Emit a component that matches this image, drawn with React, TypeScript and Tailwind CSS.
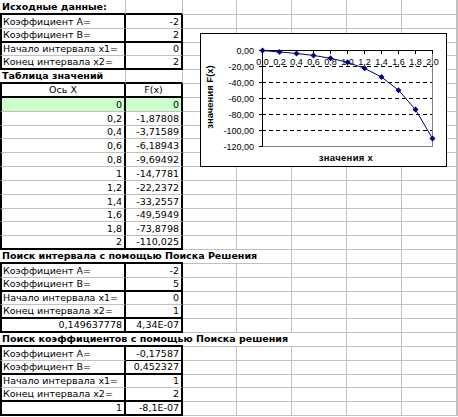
import type { ReactNode } from "react";

type RowDef = {
    a?: ReactNode;
    b?: ReactNode;
    aCls?: string;
    bCls?: string;
    tall?: boolean;
    open?: number; // how many of the columns after B lose their right gridline
    green?: boolean;
};

const L = "border-l-2 border-l-black";
const R = "border-r-2 border-r-black";
const B2 = "border-b-2 border-b-black";
const NR = "border-r-0";
const RIGHT = "justify-end pr-[2px]";
const CENTER = "justify-center";

const box = (last = false) => ({
    aCls: `${L} ${R} pl-[1px] ${last ? B2 : ""}`,
    bCls: `${R} ${RIGHT} ${last ? B2 : ""}`,
});

const num = (last = false) => ({
    aCls: `${L} ${R} ${RIGHT} ${last ? B2 : ""}`,
    bCls: `${R} ${RIGHT} ${last ? B2 : ""}`,
});

const Title = ({ children }: { children: ReactNode }) => (
    <span className="font-bold">{children}</span>
);

const ROWS: RowDef[] = [
    { a: <Title>Исходные данные:</Title>, aCls: `${B2} pl-[2px]`, bCls: B2, tall: true },
    { a: "Коэффициент А=", b: "-2", ...box() },
    { a: "Коэффициент В=", b: "2", ...box(true) },
    { a: "Начало интервала x1=", b: "0", ...box() },
    { a: "Конец интервала x2=", b: "2", ...box(true) },
    { a: <Title>Таблица значений</Title>, aCls: `${B2} pl-[2px]`, bCls: B2 },
    { a: "Ось X", b: "F(x)", aCls: `${L} ${R} ${B2} ${CENTER}`, bCls: `${R} ${B2} ${CENTER}` },
    { a: "0", b: "0", ...num(), green: true },
    { a: "0,2", b: "-1,87808", ...num() },
    { a: "0,4", b: "-3,71589", ...num() },
    { a: "0,6", b: "-6,18943", ...num() },
    { a: "0,8", b: "-9,69492", ...num() },
    { a: "1", b: "-14,7781", ...num() },
    { a: "1,2", b: "-22,2372", ...num() },
    { a: "1,4", b: "-33,2557", ...num() },
    { a: "1,6", b: "-49,5949", ...num() },
    { a: "1,8", b: "-73,8798", ...num() },
    { a: "2", b: "-110,025", ...num(true) },
    { a: <Title>Поиск интервала с помощью Поиска Решения</Title>, aCls: `${B2} ${NR} pl-[2px] overflow-visible`, bCls: `${B2} ${NR}`, open: 1 },
    { a: "Коэффициент А=", b: "-2", ...box() },
    { a: "Коэффициент В=", b: "5", ...box(true) },
    { a: "Начало интервала x1=", b: "0", ...box() },
    { a: "Конец интервала x2=", b: "1", ...box(true) },
    { a: "0,149637778", b: "4,34E-07", ...num(true) },
    { a: <Title>Поиск коэффициентов с помощью Поиска решения</Title>, aCls: `${B2} ${NR} pl-[2px] overflow-visible`, bCls: `${B2} ${NR}`, open: 2 },
    { a: "Коэффициент А=", b: "-0,17587", aCls: `${L} ${R} pl-[1px]`, bCls: `${R} ${RIGHT} border-b-black` },
    { a: "Коэффициент В=", b: "0,452327", ...box(true) },
    { a: "Начало интервала x1=", b: "1", ...box() },
    { a: "Конец интервала x2=", b: "2", ...box(true) },
    { a: "1", b: "-8,1E-07", ...num(true) },
];

const REST = ["w-[54px]", "w-[55px]", "w-[55px]", "w-[55px]", "w-[55px]", "flex-1"];

const CELL = "flex h-full shrink-0 items-end overflow-hidden whitespace-nowrap border-b border-r border-[#c0c0c0] pb-[1px] leading-[10px]";

function SheetRow({ row }: { row: RowDef }) {
    return (
        <div className={`flex ${row.tall ? "h-[15px]" : "h-[13.83px]"}`}>
            <div className={`${CELL} w-[126px] ${row.green ? "bg-[#ccffcc]" : ""} ${row.aCls ?? ""}`}>
                <span>{row.a}</span>
            </div>
            <div className={`${CELL} w-[57px] ${row.green ? "bg-[#ccffcc]" : ""} ${row.bCls ?? ""}`}>
                <span>{row.b}</span>
            </div>
            {REST.map((w, i) => (
                <div key={i} className={`${CELL} ${w} ${i < (row.open ?? 0) ? NR : ""}`} />
            ))}
        </div>
    );
}

const F = [0, 1.87808, 3.71589, 6.18943, 9.69492, 14.7781, 22.2372, 33.2557, 49.5949, 73.8798, 110.025];
const X0 = 61;
const Y0 = 16;
const pts = F.map((f, i) => [X0 + 17 * i + 0.5, Y0 + 0.8 * f + 0.5] as const);

function Chart() {
    const grid = [1, 2, 3, 4, 5];
    const yLabels = ["0,00", "-20,00", "-40,00", "-60,00", "-80,00", "-100,00", "-120,00"];
    const xLabels = ["0,0", "0,2", "0,4", "0,6", "0,8", "1,0", "1,2", "1,4", "1,6", "1,8", "2,0"];
    return (
        <div className="absolute left-[200px] top-[33px] h-[134px] w-[247px] border border-black bg-white">
            <svg width="245" height="132" className="block font-['Liberation_Sans',Arial,sans-serif]">
                {grid.map(g => (
                    <line key={g} x1={X0} x2={231} y1={Y0 + 16 * g + 0.5} y2={Y0 + 16 * g + 0.5} stroke="#000" strokeDasharray="4 3" />
                ))}
                <line x1={231.5} x2={231.5} y1={Y0} y2={113} stroke="#808080" />
                <line x1={X0} x2={232} y1={112.5} y2={112.5} stroke="#808080" />
                <line x1={X0 + 0.5} x2={X0 + 0.5} y1={Y0} y2={113} stroke="#000" />
                <line x1={X0} x2={232} y1={Y0 + 0.5} y2={Y0 + 0.5} stroke="#000" />
                {grid.concat([0, 6]).map(g => (
                    <line key={g} x1={X0 - 3} x2={X0} y1={Y0 + 16 * g + 0.5} y2={Y0 + 16 * g + 0.5} stroke="#000" />
                ))}
                {xLabels.map((_, i) => (
                    <line key={i} x1={X0 + 17 * i + 0.5} x2={X0 + 17 * i + 0.5} y1={Y0} y2={Y0 + 4} stroke="#000" />
                ))}
                {yLabels.map((t, i) => (
                    <text key={t} x={53} y={Y0 + 16 * i + 3.5} fontSize="9" textAnchor="end" fill="#000">
                        {t}
                    </text>
                ))}
                {xLabels.map((t, i) => (
                    <text key={t} x={X0 + 17 * i + 0.5} y={31} fontSize="9" textAnchor="middle" fill="#000">
                        {t}
                    </text>
                ))}
                <polyline points={pts.map(p => p.join(",")).join(" ")} fill="none" stroke="#000080" strokeWidth="1" />
                {pts.map(([x, y], i) => (
                    <polygon key={i} points={`${x},${y - 3} ${x + 3},${y} ${x},${y + 3} ${x - 3},${y}`} fill="#000080" />
                ))}
                <text x={9} y={63} fontSize="9.5" fontWeight="bold" textAnchor="middle" transform="rotate(-90 9 63)" dy="3" fill="#000">
                    значения F(x)
                </text>
                <text x={145} y={127} fontSize="9.5" fontWeight="bold" textAnchor="middle" fill="#000" letterSpacing="0.3">
                    значения х
                </text>
            </svg>
        </div>
    );
}

export default function App() {
    return (
        <div className="relative h-[417px] w-[458px] overflow-hidden bg-white font-['DejaVu_Sans',Verdana,sans-serif] text-[9.5px] text-black">
            {ROWS.map((row, i) => (
                <SheetRow key={i} row={row} />
            ))}
            <Chart />
        </div>
    );
}
